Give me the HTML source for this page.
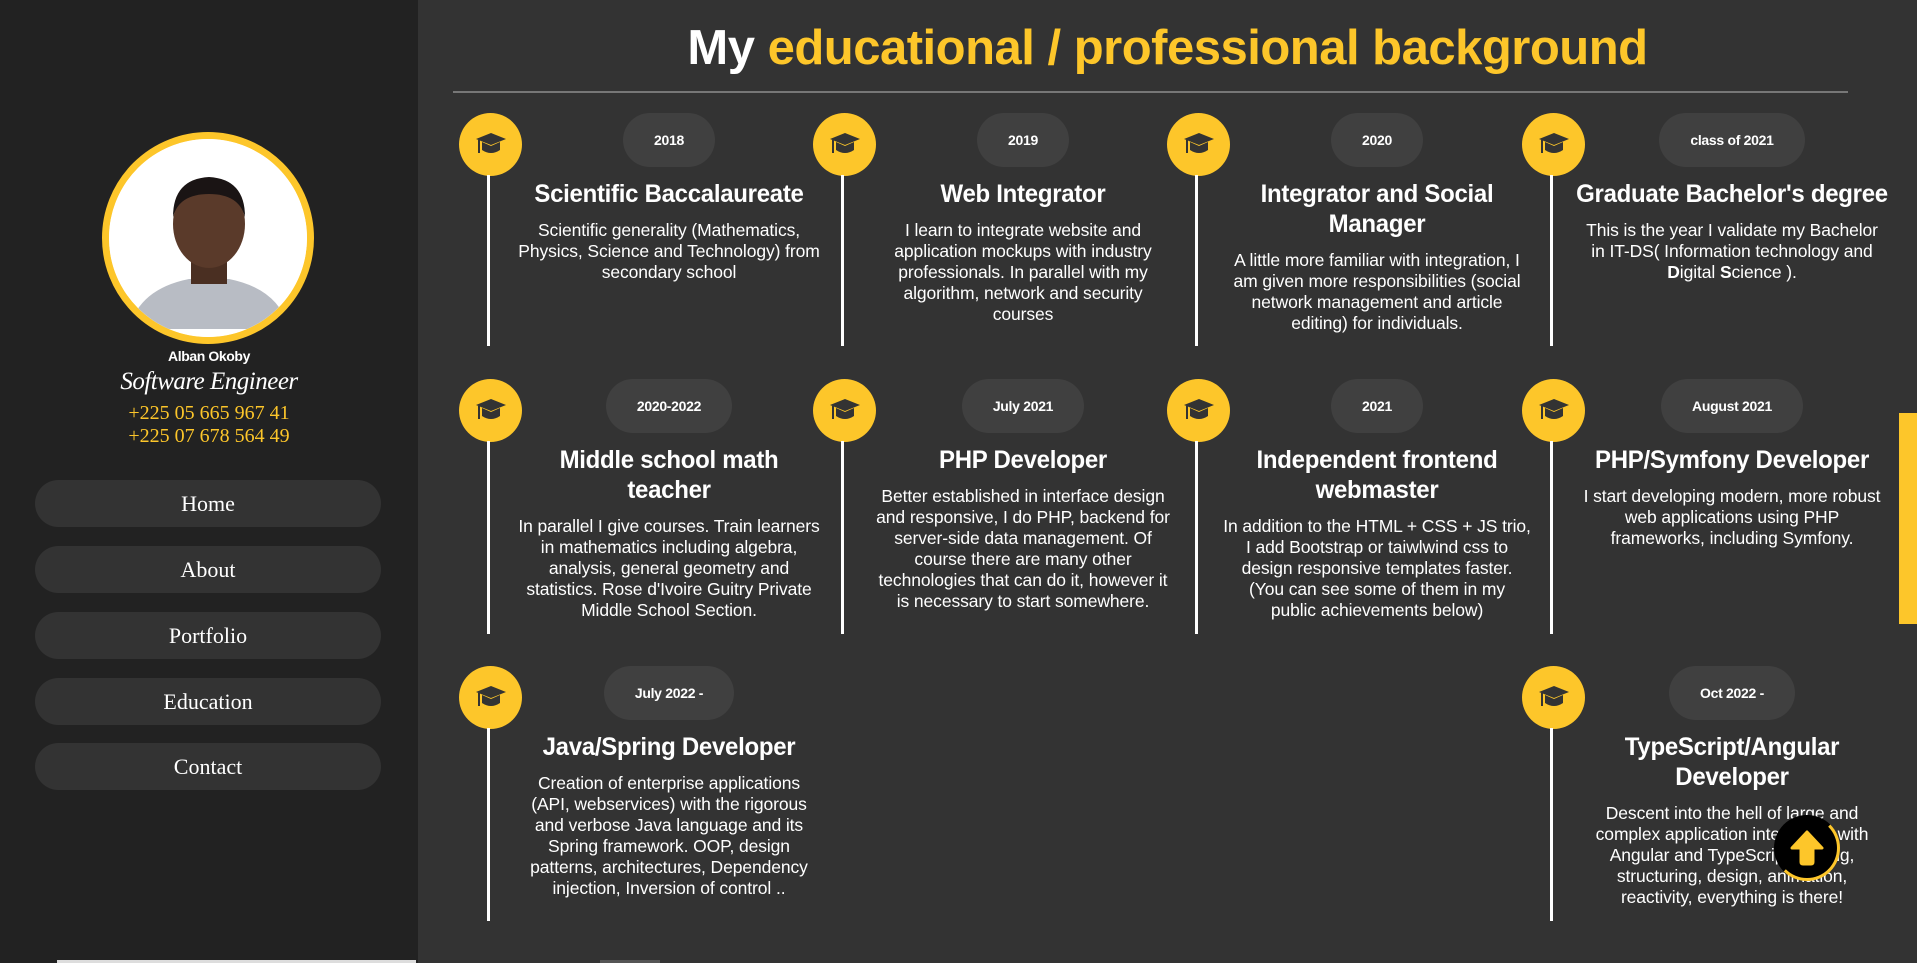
<!DOCTYPE html>
<html><head><meta charset="utf-8"><style>
*{margin:0;padding:0;box-sizing:border-box}
html,body{width:1917px;height:963px;overflow:hidden;background:#333;font-family:"Liberation Sans",Arial,sans-serif;color:#fff}
#side{position:absolute;left:0;top:0;width:418px;height:963px;background:#222}
.photo{position:absolute;left:102px;top:132px;width:212px;height:212px;border-radius:50%;border:7px solid #fdc62a;background:#fff;overflow:hidden}
.name{position:absolute;left:0;width:418px;top:348px;text-align:center;font-weight:bold;font-size:14px;letter-spacing:-0.4px}
.job{position:absolute;left:0;width:418px;top:368px;text-align:center;font-family:"Liberation Serif",serif;font-style:italic;font-size:25px;letter-spacing:-0.5px}
.ph{position:absolute;left:0;width:418px;text-align:center;font-family:"Liberation Serif",serif;font-size:20px;color:#fdc62a}
.nav{position:absolute;left:35px;width:346px;height:47px;border-radius:24px;background:#333;text-align:center;line-height:47px;font-family:"Liberation Serif",serif;font-size:22px}
.title{position:absolute;left:418px;width:1499px;top:20px;text-align:center}
.title span.in{display:inline-block;font-weight:bold;font-size:49px;white-space:nowrap;letter-spacing:-0.5px}
.y{color:#fdc62a}
.hr{position:absolute;left:453px;width:1395px;top:91px;height:2px;background:#777}
.card{position:absolute;width:354px}
.circ{position:absolute;left:0;top:0;width:63px;height:63px;border-radius:50%;background:#fdc62a}
.circ svg{position:absolute;left:16px;top:18px}
.line{position:absolute;left:28px;width:3px;background:#fff}
.ct{position:absolute;left:45px;width:330px;text-align:center}
.pill{display:inline-block;height:54px;line-height:54px;padding:0 31px;border-radius:27px;background:#404040;font-weight:bold;font-size:14px;letter-spacing:-0.3px}
.h{margin-top:12px;font-weight:bold;font-size:25px;line-height:30px;white-space:nowrap;transform:scaleX(0.96);letter-spacing:-0.3px}
.d{margin-top:11px;font-size:17.5px;line-height:21px;white-space:nowrap;letter-spacing:-0.1px}
#bar{position:absolute;left:1899px;top:413px;width:18px;height:211px;background:#fdc62a}
#up{position:absolute;left:1774px;top:815px;width:66px;height:66px;border-radius:50%;background:#000;border:3px solid #fdc62a;border-left-color:#000;border-top-color:#000}
</style></head><body>
<div id="side">
<div class="photo"><svg width="198" height="198" viewBox="0 0 198 198">
<rect width="198" height="198" fill="#fff"/>
<path d="M20 190 Q30 150 80 140 L120 140 Q170 150 180 190 Z" fill="#b8bcc4"/>
<rect x="82" y="115" width="36" height="30" fill="#4a2f22"/>
<ellipse cx="100" cy="85" rx="36" ry="44" fill="#5a3a2a"/>
<path d="M64 78 Q64 40 100 38 Q136 40 136 78 Q130 55 100 55 Q70 55 64 78Z" fill="#1a1414"/>
</svg></div>
<div class="name">Alban Okoby</div>
<div class="job">Software Engineer</div>
<div class="ph" style="top:402px">+225 05 665 967 41</div>
<div class="ph" style="top:425px">+225 07 678 564 49</div>
<div class="nav" style="top:480px">Home</div>
<div class="nav" style="top:546px">About</div>
<div class="nav" style="top:612px">Portfolio</div>
<div class="nav" style="top:678px">Education</div>
<div class="nav" style="top:743px">Contact</div>
<div style="position:absolute;left:57px;top:960px;width:359px;height:3px;background:#ddd"></div>
</div>
<div style="position:absolute;left:600px;top:960px;width:60px;height:3px;background:#555"></div>
<div class="title"><span class="in">My <span class="y">educational / professional background</span></span></div>
<div class="hr"></div>

<div class="card" style="left:459px;top:113px"><div class="circ"><svg width="32" height="28" viewBox="0 0 32 28"><path d="M16 2 L31 8 L16 14 L1 8Z" fill="#333"/><path d="M7 11 L7 19 Q16 25 25 19 L25 11 L16 15Z" fill="#333"/><rect x="3" y="9" width="2" height="13" fill="#333"/></svg></div><div class="line" style="top:62px;height:171px"></div>
<div class="ct"><div class="pill">2018</div><div class="h">Scientific Baccalaureate</div><div class="d">Scientific generality (Mathematics,<br>Physics, Science and Technology) from<br>secondary school</div></div></div>

<div class="card" style="left:813px;top:113px"><div class="circ"><svg width="32" height="28" viewBox="0 0 32 28"><path d="M16 2 L31 8 L16 14 L1 8Z" fill="#333"/><path d="M7 11 L7 19 Q16 25 25 19 L25 11 L16 15Z" fill="#333"/><rect x="3" y="9" width="2" height="13" fill="#333"/></svg></div><div class="line" style="top:62px;height:171px"></div>
<div class="ct"><div class="pill">2019</div><div class="h">Web Integrator</div><div class="d">I learn to integrate website and<br>application mockups with industry<br>professionals. In parallel with my<br>algorithm, network and security<br>courses</div></div></div>

<div class="card" style="left:1167px;top:113px"><div class="circ"><svg width="32" height="28" viewBox="0 0 32 28"><path d="M16 2 L31 8 L16 14 L1 8Z" fill="#333"/><path d="M7 11 L7 19 Q16 25 25 19 L25 11 L16 15Z" fill="#333"/><rect x="3" y="9" width="2" height="13" fill="#333"/></svg></div><div class="line" style="top:62px;height:171px"></div>
<div class="ct"><div class="pill">2020</div><div class="h">Integrator and Social<br>Manager</div><div class="d">A little more familiar with integration, I<br>am given more responsibilities (social<br>network management and article<br>editing) for individuals.</div></div></div>

<div class="card" style="left:1522px;top:113px"><div class="circ"><svg width="32" height="28" viewBox="0 0 32 28"><path d="M16 2 L31 8 L16 14 L1 8Z" fill="#333"/><path d="M7 11 L7 19 Q16 25 25 19 L25 11 L16 15Z" fill="#333"/><rect x="3" y="9" width="2" height="13" fill="#333"/></svg></div><div class="line" style="top:62px;height:171px"></div>
<div class="ct"><div class="pill">class of 2021</div><div class="h">Graduate Bachelor's degree</div><div class="d">This is the year I validate my Bachelor<br>in IT-DS( Information technology and<br><b>D</b>igital <b>S</b>cience ).</div></div></div>

<div class="card" style="left:459px;top:379px"><div class="circ"><svg width="32" height="28" viewBox="0 0 32 28"><path d="M16 2 L31 8 L16 14 L1 8Z" fill="#333"/><path d="M7 11 L7 19 Q16 25 25 19 L25 11 L16 15Z" fill="#333"/><rect x="3" y="9" width="2" height="13" fill="#333"/></svg></div><div class="line" style="top:62px;height:193px"></div>
<div class="ct"><div class="pill">2020-2022</div><div class="h">Middle school math<br>teacher</div><div class="d">In parallel I give courses. Train learners<br>in mathematics including algebra,<br>analysis, general geometry and<br>statistics. Rose d'Ivoire Guitry Private<br>Middle School Section.</div></div></div>

<div class="card" style="left:813px;top:379px"><div class="circ"><svg width="32" height="28" viewBox="0 0 32 28"><path d="M16 2 L31 8 L16 14 L1 8Z" fill="#333"/><path d="M7 11 L7 19 Q16 25 25 19 L25 11 L16 15Z" fill="#333"/><rect x="3" y="9" width="2" height="13" fill="#333"/></svg></div><div class="line" style="top:62px;height:193px"></div>
<div class="ct"><div class="pill">July 2021</div><div class="h">PHP Developer</div><div class="d">Better established in interface design<br>and responsive, I do PHP, backend for<br>server-side data management. Of<br>course there are many other<br>technologies that can do it, however it<br>is necessary to start somewhere.</div></div></div>

<div class="card" style="left:1167px;top:379px"><div class="circ"><svg width="32" height="28" viewBox="0 0 32 28"><path d="M16 2 L31 8 L16 14 L1 8Z" fill="#333"/><path d="M7 11 L7 19 Q16 25 25 19 L25 11 L16 15Z" fill="#333"/><rect x="3" y="9" width="2" height="13" fill="#333"/></svg></div><div class="line" style="top:62px;height:193px"></div>
<div class="ct"><div class="pill">2021</div><div class="h">Independent frontend<br>webmaster</div><div class="d">In addition to the HTML + CSS + JS trio,<br>I add Bootstrap or taiwlwind css to<br>design responsive templates faster.<br>(You can see some of them in my<br>public achievements below)</div></div></div>

<div class="card" style="left:1522px;top:379px"><div class="circ"><svg width="32" height="28" viewBox="0 0 32 28"><path d="M16 2 L31 8 L16 14 L1 8Z" fill="#333"/><path d="M7 11 L7 19 Q16 25 25 19 L25 11 L16 15Z" fill="#333"/><rect x="3" y="9" width="2" height="13" fill="#333"/></svg></div><div class="line" style="top:62px;height:193px"></div>
<div class="ct"><div class="pill">August 2021</div><div class="h">PHP/Symfony Developer</div><div class="d">I start developing modern, more robust<br>web applications using PHP<br>frameworks, including Symfony.</div></div></div>

<div class="card" style="left:459px;top:666px"><div class="circ"><svg width="32" height="28" viewBox="0 0 32 28"><path d="M16 2 L31 8 L16 14 L1 8Z" fill="#333"/><path d="M7 11 L7 19 Q16 25 25 19 L25 11 L16 15Z" fill="#333"/><rect x="3" y="9" width="2" height="13" fill="#333"/></svg></div><div class="line" style="top:62px;height:193px"></div>
<div class="ct"><div class="pill">July 2022 -</div><div class="h">Java/Spring Developer</div><div class="d">Creation of enterprise applications<br>(API, webservices) with the rigorous<br>and verbose Java language and its<br>Spring framework. OOP, design<br>patterns, architectures, Dependency<br>injection, Inversion of control ..</div></div></div>

<div class="card" style="left:1522px;top:666px"><div class="circ"><svg width="32" height="28" viewBox="0 0 32 28"><path d="M16 2 L31 8 L16 14 L1 8Z" fill="#333"/><path d="M7 11 L7 19 Q16 25 25 19 L25 11 L16 15Z" fill="#333"/><rect x="3" y="9" width="2" height="13" fill="#333"/></svg></div><div class="line" style="top:62px;height:193px"></div>
<div class="ct"><div class="pill">Oct 2022 -</div><div class="h">TypeScript/Angular<br>Developer</div><div class="d">Descent into the hell of large and<br>complex application integration with<br>Angular and TypeScript: testing,<br>structuring, design, animation,<br>reactivity, everything is there!</div></div></div>

<div id="bar"></div>
<div id="up"><svg width="60" height="60" viewBox="0 0 60 60" style="position:absolute;left:0;top:0"><path d="M30 14 L45 30 L36 30 L36 44 Q36 46 34 46 L26 46 Q24 46 24 44 L24 30 L15 30 Z" fill="#fdc62a" stroke="#fdc62a" stroke-width="3" stroke-linejoin="round"/></svg></div>
</body></html>
